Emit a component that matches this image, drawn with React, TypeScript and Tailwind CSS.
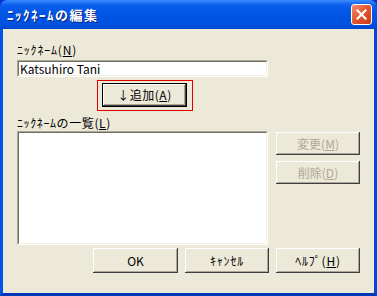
const font = { fontFamily: '"Noto Sans CJK JP", "Liberation Sans", sans-serif' };

function Btn({
  children,
  disabled,
  def,
  className = '',
}: {
  children: React.ReactNode;
  disabled?: boolean;
  def?: boolean;
  className?: string;
}) {
  return (
    <div
      className={`flex items-center justify-center bg-[#ECE9D8] text-[12px] leading-[14px] shadow-[inset_-1px_-1px_0_#404040,inset_1px_1px_0_#ffffff,inset_-2px_-2px_0_#ACA899] ${
        def ? 'border border-black' : ''
      } ${disabled ? 'text-[#ACA899]' : 'text-black'} ${className}`}
    >
      {children}
    </div>
  );
}

function Sunken({ className = '', children }: { className?: string; children?: React.ReactNode }) {
  return (
    <div className={`border border-t-[#ACA899] border-l-[#ACA899] border-r-white border-b-white ${className}`}>
      <div className="h-full border border-t-[#716F64] border-l-[#716F64] border-r-[#F1EFE2] border-b-[#F1EFE2] bg-white">
        {children}
      </div>
    </div>
  );
}

export default function App() {
  return (
    <div className="w-[377px] h-[296px] flex flex-col bg-[#0831D9] overflow-hidden" style={font}>
      {/* title bar */}
      <div className="h-[29px] shrink-0 rounded-t-[7px] flex items-center pl-[7px] pr-[5px] bg-[linear-gradient(to_bottom,#3A8CFC_0%,#0A5EEC_18%,#0055E5_50%,#0052E0_85%,#0046CE_100%)]">
        <span className="flex-1 text-white font-bold text-[13px] tracking-[1.5px] [text-shadow:1px_1px_0_#0A1E7A]">
          ﾆｯｸﾈｰﾑの編集
        </span>
        <div className="w-[21px] h-[21px] rounded-[3px] border border-white bg-gradient-to-br from-[#F08B6B] via-[#E2552E] to-[#C43B14] flex items-center justify-center">
          <svg width="11" height="11" viewBox="0 0 11 11">
            <path d="M1.5 1.5 L9.5 9.5 M9.5 1.5 L1.5 9.5" stroke="white" strokeWidth="2.2" strokeLinecap="square" />
          </svg>
        </div>
      </div>

      {/* body */}
      <div className="flex flex-1 border-l-[3px] border-r-[3px] border-b-[3px] border-l-[#0055E5] border-r-[#0047DA] border-b-[#0036B8]">
        <div className="flex-1 bg-[#ECE9D8] pl-[14px] pt-[14px] flex flex-col">
          <div className="flex">
            <div className="w-[251px] flex flex-col">
              <div className="h-[14px] text-[12px] leading-[14px] text-black tracking-[0.8px]">
                ﾆｯｸﾈｰﾑ(<span className="underline">N</span>)
              </div>
              <Sunken className="mt-[3px] h-[17px]">
                <div className="pl-[1px] text-[12px] leading-[13px] text-black">Katsuhiro Tani</div>
              </Sunken>
              <div className="mt-[3px] ml-[80px] w-[96px] h-[31px] border border-[#E00000] pl-[4px] pt-[2px]">
                <Btn def className="w-[85px] h-[24px] tracking-[0.5px]">
                  ↓追加(<span className="underline">A</span>)
                </Btn>
              </div>
              <div className="mt-[5px] h-[14px] text-[12px] leading-[14px] text-black tracking-[0.6px]">
                ﾆｯｸﾈｰﾑの一覧(<span className="underline">L</span>)
              </div>
              <Sunken className="mt-[1px] h-[114px]" />
            </div>
            <div className="ml-[8px] w-[84px] pt-[89px] flex flex-col gap-[6px]">
              <Btn disabled className="h-[23px]">
                変更(<span className="underline">M</span>)
              </Btn>
              <Btn disabled className="h-[23px]">
                削除(<span className="underline">D</span>)
              </Btn>
            </div>
          </div>
          <div className="mt-[3px] ml-[76px] flex gap-[7px]">
            <Btn className="w-[85px] h-[25px]">OK</Btn>
            <Btn className="w-[84px] h-[25px] tracking-[0.8px]">ｷｬﾝｾﾙ</Btn>
            <Btn className="w-[84px] h-[25px] tracking-[0.8px]">
              ﾍﾙﾌﾟ(<span className="underline">H</span>)
            </Btn>
          </div>
        </div>
      </div>
    </div>
  );
}
